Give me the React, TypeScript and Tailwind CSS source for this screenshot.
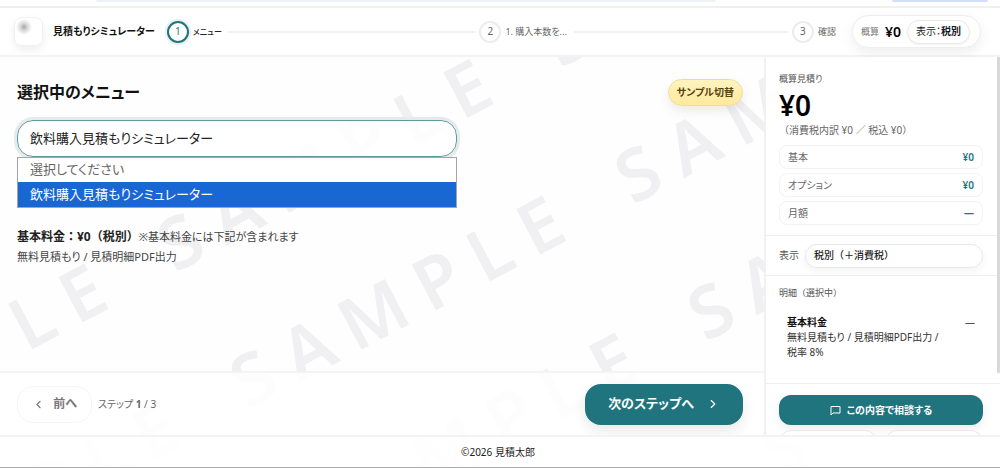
import React, { useState } from 'react';
import { ChevronLeft, ChevronRight } from 'lucide-react';

const steps = ['メニュー', '1. 購入本数を...', '確認'];

const menus = ['選択してください', '飲料購入見積もりシミュレーター'];

const totals = [
  { label: '基本', value: '¥0' },
  { label: 'オプション', value: '¥0' },
  { label: '月額', value: '—' },
];

// SAMPLE tiles, measured along the slanted baseline
const watermarkRows = [
  { x: -436, y: -155, word: 'LE' },
  { x: 0, y: -155, word: 'SAMPLE' },
  { x: 436, y: -155, word: 'S' },
  { x: -436, y: 0, word: 'PLE' },
  { x: 0, y: 0, word: 'SAMPLE' },
  { x: 436, y: 0, word: 'SAM' },
  { x: 0, y: 155, word: 'MPLE' },
  { x: 436, y: 155, word: 'SA' },
  { x: 436, y: 310, word: 'S' },
];
const letterCenters: Record<string, number> = { S: 0, A: 62, M: 136, P: 209, L: 268, E: 325 };

function Watermark() {
  return (
    <svg className="pointer-events-none absolute inset-0 h-full w-full" aria-hidden="true">
      <g
        transform="translate(253 378) rotate(-28)"
        className="fill-[#f0f0f3] text-[72px] font-semibold"
        textAnchor="middle"
      >
        {watermarkRows.map((row) => (
          <text key={`${row.x}-${row.y}`} y={row.y + 26}>
            {row.word.split('').map((char) => (
              <tspan key={char} x={row.x + letterCenters[char]}>
                {char}
              </tspan>
            ))}
          </text>
        ))}
      </g>
    </svg>
  );
}

function ChatIcon() {
  return (
    <svg width="11" height="11" viewBox="0 0 22 22" fill="none" stroke="currentColor" strokeWidth="2">
      <path d="M2 3h18v13H6l-4 4z" />
    </svg>
  );
}

function WindowEdge() {
  return (
    <div className="relative flex h-2 shrink-0 items-start border-b-2 border-[#f0f0f1] bg-white">
      <div className="ml-24 h-0.5 w-[62%] rounded-b-full bg-[#edf2f8]" />
      <div className="mr-3 ml-auto h-0.5 w-24 rounded-b-full bg-[#d0e0fb]" />
    </div>
  );
}

function Stepper({ current }: { current: number }) {
  return (
    <ol className="flex min-w-0 flex-1 items-center">
      {steps.map((label, index) => {
        const active = index === current;
        const last = index === steps.length - 1;
        return (
          <li key={label} className={last ? 'flex items-center' : 'flex min-w-0 flex-1 items-center'}>
            <span
              className={
                active
                  ? 'flex size-[22px] shrink-0 items-center justify-center rounded-full border-2 border-[#1f747d] bg-white text-[10px] text-[#1f747d] ring-2 ring-[#e9eeef]'
                  : 'flex size-[22px] shrink-0 items-center justify-center rounded-full border-2 border-[#ececec] bg-white text-[10px] text-[#666]'
              }
            >
              {index + 1}
            </span>
            <span
              className={
                active
                  ? 'ml-1 text-[8px] font-medium whitespace-nowrap text-[#222]'
                  : 'ml-1 text-[9px] whitespace-nowrap text-[#666]'
              }
            >
              {label}
            </span>
            {!last && <span className="mr-1 ml-1.5 h-0.5 flex-1 bg-[#f1f1f1]" />}
          </li>
        );
      })}
    </ol>
  );
}

function Header() {
  return (
    <header className="relative flex h-[49px] shrink-0 items-center border-b-2 border-[#f3f3f4] bg-white/98 pr-[19px] pl-3.5">
      <div className="size-[29px] shrink-0 rounded-lg border border-[#f1f1f1] bg-[radial-gradient(circle_at_9px_9px,#a8a8a8_0,#dcdcdc_4px,#fff_8px)] shadow-[0_4px_10px_rgba(0,0,0,0.07)]" />
      <h1 className="mr-3 ml-2.5 text-[10px] font-bold whitespace-nowrap text-[#111]">見積もりシミュレーター</h1>
      <Stepper current={0} />
      <div className="ml-4 flex h-[33px] shrink-0 items-center rounded-full border border-[#eee] bg-white pr-2.5 pl-2 shadow-[0_5px_14px_rgba(0,0,0,0.07)]">
        <span className="text-[9px] text-[#777]">概算</span>
        <span className="mx-1.5 text-sm font-semibold text-black">¥0</span>
        <button className="h-6 rounded-full border border-[#e8e8e8] bg-white px-2 text-[10px] whitespace-nowrap text-[#222] shadow-xs">
          表示：<b className="text-[#111827]">税別</b>
        </button>
      </div>
    </header>
  );
}

function MenuSelect() {
  const [menu, setMenu] = useState(menus[1]);

  return (
    <div className="relative mt-3.5 max-w-[440px]">
      <select
        aria-label="選択中のメニュー"
        value={menu}
        onChange={(e) => setMenu(e.target.value)}
        className="block h-[37px] w-full appearance-none rounded-2xl border border-[#5e9ba1] bg-white/85 px-3 text-[13px] text-[#222] ring-3 ring-[#e5ebec] outline-none"
      >
        {menus.map((name) => (
          <option key={name}>{name}</option>
        ))}
      </select>
      <ul className="absolute top-full right-0 left-0 border border-[#a5a5a5] bg-white text-[13px]">
        {menus.map((name) => (
          <li
            key={name}
            onClick={() => setMenu(name)}
            className={
              name === menu
                ? 'flex h-[25px] items-center bg-[#1967d2] px-3 text-white'
                : 'flex h-6 items-center px-3 text-[#666]'
            }
          >
            {name}
          </li>
        ))}
      </ul>
    </div>
  );
}

function MenuPanel() {
  return (
    <section className="relative min-h-0 flex-1 px-[17px] pt-[21px]">
      <div className="flex items-center justify-between pr-1">
        <h2 className="text-base leading-7 font-bold text-[#111]">選択中のメニュー</h2>
        <button className="h-[27px] rounded-full border border-[#f0dc9a] bg-linear-to-b from-[#fff3bf] to-[#fdea9d] px-2 text-[10px] font-bold text-[#57430f] shadow-[0_5px_12px_rgba(0,0,0,0.08)]">
          サンプル切替
        </button>
      </div>
      <MenuSelect />
      <div className="mt-[70px] text-[11px] leading-5 text-[#444]">
        <p>
          <b className="text-xs leading-5 text-[#222] [font-feature-settings:normal]">基本料金：¥0（税別）</b>
          ※基本料金には下記が含まれます
        </p>
        <p>無料見積もり / 見積明細PDF出力</p>
      </div>
    </section>
  );
}

function StepNav() {
  return (
    <nav className="relative flex h-16 shrink-0 items-center border-t-2 border-[#f4f4f5] bg-white/85 pr-[21px] pl-[17px]">
      <button
        disabled
        className="flex h-[37px] w-[75px] items-center justify-center gap-2 rounded-2xl border border-[#f5f5f5] bg-white/60 text-xs font-semibold text-[#777]"
      >
        <ChevronLeft size={13} />
        前へ
      </button>
      <span className="ml-1.5 text-[10px] text-[#666]">
        ステップ <b>1</b> / 3
      </span>
      <button className="ml-auto flex h-[41px] w-[158px] items-center justify-center gap-3 rounded-2xl bg-[#1f747d] text-[13px] font-bold text-white shadow-[0_6px_14px_rgba(0,0,0,0.09)]">
        次のステップへ
        <ChevronRight size={14} />
      </button>
    </nav>
  );
}

function Summary() {
  return (
    <aside className="relative flex w-[236px] shrink-0 flex-col overflow-hidden border-l-2 border-[#f1f1f2] bg-white">
      <div className="absolute top-0 right-0 h-[316px] w-[3px] bg-[#d9d9d9]" />
      <div className="border-b border-[#eee] pt-3.5 pr-[17px] pb-2.5 pl-[13px]">
        <p className="text-[9px] leading-4 text-[#555]">概算見積り</p>
        <p className="text-[28px] leading-9 font-semibold text-black">¥0</p>
        <p className="mb-2 text-[10px] leading-3.5 text-[#666] [font-feature-settings:normal]">
          （消費税内訳 ¥0 ／ 税込 ¥0）
        </p>
        <dl className="flex flex-col gap-1">
          {totals.map((row) => (
            <div
              key={row.label}
              className="flex h-6 items-center justify-between rounded-lg border border-[#f3f3f4] px-2 text-[10px]"
            >
              <dt className="text-[#666]">{row.label}</dt>
              <dd className="font-semibold text-[#1f747d]">{row.value}</dd>
            </div>
          ))}
        </dl>
      </div>
      <div className="flex h-10 shrink-0 items-center gap-1.5 border-b border-[#eee] pr-[17px] pl-[13px]">
        <label htmlFor="tax" className="text-[10px] text-[#555]">
          表示
        </label>
        <select
          id="tax"
          className="h-6 min-w-0 flex-1 appearance-none rounded-full border border-[#e9e9e9] bg-white px-2 text-[10px] font-medium text-[#222] shadow-[0_3px_8px_rgba(0,0,0,0.05)] [font-feature-settings:normal]"
        >
          <option>税別（＋消費税）</option>
          <option>税込</option>
        </select>
      </div>
      <div className="h-[108px] shrink-0 border-b border-[#eee] pt-[9px] pr-[17px] pl-[13px]">
        <p className="text-[9px] leading-4 text-[#555] [font-feature-settings:normal]">明細（選択中）</p>
        <div className="mt-3.5 flex justify-between px-2">
          <div className="text-[10px] leading-[15px] text-[#333]">
            <p className="font-bold text-[#111]">基本料金</p>
            <p>
              無料見積もり / 見積明細PDF出力 /
              <br />
              税率 8%
            </p>
          </div>
          <span className="text-[10px] leading-[15px] text-[#555]">—</span>
        </div>
      </div>
      <div className="pt-[11px] pr-[17px] pl-[13px]">
        <button className="flex h-[30px] w-full items-center justify-center gap-1.5 rounded-xl bg-[#1f747d] text-[10px] font-bold text-white shadow-[0_4px_10px_rgba(0,0,0,0.08)]">
          <ChatIcon />
          この内容で相談する
        </button>
        <div className="mt-[5px] flex gap-2">
          <button aria-label="印刷" className="h-[30px] flex-1 rounded-xl border border-[#e8e8e8] bg-white" />
          <button aria-label="保存" className="h-[30px] flex-1 rounded-xl border border-[#e8e8e8] bg-white" />
        </div>
      </div>
    </aside>
  );
}

export default function App() {
  return (
    <div className="relative flex h-screen flex-col overflow-hidden bg-[#fefefe] font-['Noto_Sans','Noto_Sans_CJK_JP',sans-serif] [font-feature-settings:'palt']">
      <Watermark />
      <WindowEdge />
      <Header />
      <div className="flex min-h-0 flex-1">
        <main className="flex min-w-0 flex-1 flex-col">
          <MenuPanel />
          <StepNav />
        </main>
        <Summary />
      </div>
      <footer className="relative flex h-[33px] shrink-0 items-center justify-center border-t-2 border-b border-t-[#f3f3f4] border-b-[#aaa] bg-white/90 pr-1 text-[10px] text-[#222]">
        ©2026 見積太郎
      </footer>
    </div>
  );
}
